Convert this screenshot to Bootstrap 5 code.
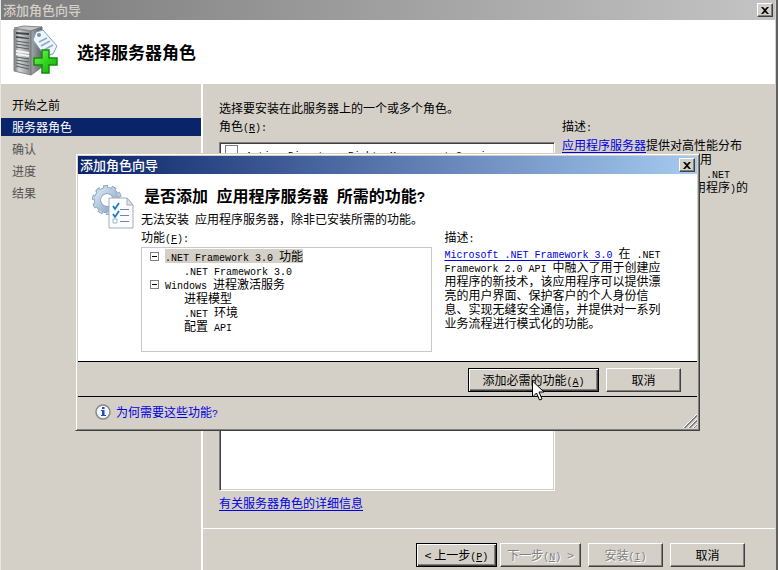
<!DOCTYPE html>
<html lang="zh-CN">
<head>
<meta charset="utf-8">
<meta name="viewport" content="width=device-width, initial-scale=1">
<title>添加角色向导</title>
<link href="https://cdn.jsdelivr.net/npm/bootstrap@5.3.0/dist/css/bootstrap.min.css" rel="stylesheet">
<style>
  :root { --face: #d4d0c8; --navy: #0a246a; --shade: #808080; --dark: #404040; --link: #0000e0; }
  body { background: var(--face); color: #000; font: 12px/18px "Noto Sans CJK SC", sans-serif; }
  a, a:hover { color: var(--link); text-underline-offset: 2px; text-decoration-thickness: 1px; }
  .lat { font-family: "Liberation Mono", monospace; font-size: 10px; line-height: 0; white-space: pre; }
  .wizard { border-left: 1px solid #e8e6e0; border-right: 2px solid #606060; padding-right: 1px; }
  .caption { font-size: 13px; font-weight: 500; }
  .caption-idle { height: 20px; padding: 0 2px; color: var(--face); background: linear-gradient(90deg, #7c7c7c, #c4c4c4); }
  .caption-live { height: 18px; padding: 0 2px; color: #fff; background: linear-gradient(90deg, var(--navy), #a6caf0); }
  .win-btn { background: var(--face); color: #000; border: 1px solid; border-color: #fff var(--dark) var(--dark) #fff; border-radius: 0; box-shadow: inset -1px -1px var(--shade); font-size: 12px; line-height: 16px; padding: 0; height: 24px; min-width: 75px; white-space: nowrap; }
  .win-btn.wide { min-width: 81px; }
  .win-btn.preset { border-color: #000; box-shadow: inset 1px 1px #fff, inset -1px -1px var(--dark), inset -2px -2px var(--shade); }
  .win-btn:disabled { color: var(--shade); text-shadow: 1px 1px #fff; }
  .close-btn { min-width: 16px; width: 16px; height: 14px; display: flex; align-items: center; justify-content: center; }
  .banner { height: 64px; padding-left: 10px; }
  .banner h1 { font-size: 17px; line-height: 24px; font-weight: 700; }
  .steps { flex: 0 0 202px; border-right: 2px solid #fff; padding-top: 12px; }
  .steps a { display: block; color: #000; line-height: 18px; padding: 0 11px; margin-bottom: 4px; text-decoration: none; }
  .steps a.current { background: var(--navy); color: #fff; }
  .steps a.later { color: #55534f; }
  .page-body { padding: 15px 0 16px 16px; }
  .role-grid { display: grid; grid-template-columns: 336fr 213fr; gap: 7px; }
  .role-list { border: 1px solid; border-color: var(--shade) #fff #fff var(--shade); box-shadow: inset 1px 1px var(--dark), inset -1px -1px var(--face); margin: 7px 0 3px; padding: 2px 5px; }
  .role-list input { appearance: none; width: 13px; height: 13px; margin: 0; border: 1px solid var(--shade); background: #fff; }
  .role-list label { padding-top: 2px; }
  .tight { line-height: 14px; white-space: nowrap; }
  .role-note { margin: 3px 0 0; }
  .page-foot { border-top: 1px solid #fff; padding: 14px 30px 3px 0; gap: 7px; }
  .pair { gap: 3px; }
  .dialog-win { position: absolute; left: 75px; top: 153px; width: 625px; background: var(--face); border: 1px solid; border-color: var(--face) var(--dark) var(--dark) var(--face); box-shadow: inset 1px 1px #fff, inset -1px -1px var(--shade); padding: 2px; }
  .dialog-page { padding: 8px 19px 9px 11px; border-bottom: 1px solid #000; }
  .dialog-page h2 { font-size: 16px; line-height: 26px; font-weight: 700; padding: 0 0 0 3px; margin-bottom: 2px; }
  .dialog-page h2 .lat { font-size: 14px; }
  .dialog-grid { display: grid; grid-template-columns: 292fr 234fr; gap: 12px; }
  .tree { border: 1px solid #c8c8cc; height: 105px; padding: 1px 0 0 8px; margin-top: 1px; }
  .tree ul { list-style: none; margin: 0; padding: 0; }
  .tree ul ul { padding-left: 34px; }
  .tree .node { display: flex; align-items: center; gap: 6px; }
  .tree .picked { background: var(--face); }
  .fold { width: 9px; height: 9px; padding: 0; border: 1px solid var(--shade); background: #fff; display: flex; align-items: center; justify-content: center; }
  .fold::before { content: ""; width: 5px; height: 1px; background: #000; }
  .dialog-actions { padding: 6px 16px 4px; gap: 7px; border-bottom: 1px solid #000; }
  .dialog-actions .preset { min-width: 131px; }
  .dialog-help { height: 31px; padding: 0 0 1px 17px; gap: 5px; }
  .grip { position: absolute; right: 2px; bottom: 2px; }
  .pointer { position: absolute; left: 456px; top: 226px; }
</style>
<script src="https://cdn.jsdelivr.net/npm/bootstrap@5.3.0/dist/js/bootstrap.bundle.min.js"></script>
</head>
<body>
<div class="wizard d-flex flex-column min-vh-100">
  <header>
    <div class="caption caption-idle d-flex align-items-center justify-content-between">
      <span>添加角色向导</span>
      <button class="win-btn close-btn" type="button" aria-label="关闭"><svg width="8" height="7" viewBox="0 0 8 7"><path d="M0 0h2l2 2 2-2h2L5 3.500 8 7H6L4 5 2 7H0l3-3.500z"/></svg></button>
    </div>
    <div class="banner bg-white d-flex align-items-center">
      <svg width="50" height="54" viewBox="0 0 50 54" aria-hidden="true">
        <defs>
          <linearGradient id="sv" x1="0" x2="1"><stop offset="0" stop-color="#6f7275"/><stop offset=".3" stop-color="#d3d6d8"/><stop offset="1" stop-color="#85898c"/></linearGradient>
          <linearGradient id="sd" x1="0" x2="1"><stop offset="0" stop-color="#a5a8aa"/><stop offset="1" stop-color="#5f6366"/></linearGradient>
          <linearGradient id="pl" x1="0" y1="0" x2="1" y2="1"><stop offset="0" stop-color="#8cf06c"/><stop offset=".5" stop-color="#31d51d"/><stop offset="1" stop-color="#16a80e"/></linearGradient>
        </defs>
        <path d="M3 3l10-2 18 1-11 4z" fill="#c3c6c8" stroke="#888"/>
        <path d="M3 4l17 2v44L3 46z" fill="url(#sv)" stroke="#85898c"/>
        <path d="M20 6l11-4v40l-11 8z" fill="url(#sd)" stroke="#777"/>
        <path d="M5 7l13 1v2L5 9zM5 11l13 2v1L5 13z" fill="#404448"/>
        <path d="M5 16l13 2M5 19l13 2M5 22l13 2M5 32l13 2M5 35l13 2M5 38l13 3M5 41l13 3" stroke="#5c5f62" stroke-width="1.200"/>
        <path d="M5 26l13 2M5 29l13 2" stroke="#f4f4f4" stroke-width="2"/>
        <path d="M24 8q3-5 6 1" fill="none" stroke="#555"/>
        <path d="M25 7l7-2 14 16-4 8-8 2-12-16z" fill="#edf5fd" stroke="#7f9ec2"/>
        <circle cx="28" cy="10" r="2" fill="#8190a0"/>
        <path d="M28 17l8-4M30 21l9-5M33 25l9-5" stroke="#92a9cb" stroke-width="1.500"/>
        <path d="M31 25h7v8h8v7h-8v8h-7v-8h-8v-7h8z" fill="url(#pl)" stroke="#138c0f" stroke-width="1.500"/>
      </svg>
      <h1 class="m-0 ps-3">选择服务器角色</h1>
    </div>
  </header>

  <div class="d-flex flex-grow-1">
    <nav class="steps" aria-label="步骤">
      <a href="#">开始之前</a>
      <a href="#" class="current" aria-current="step">服务器角色</a>
      <a href="#" class="later">确认</a>
      <a href="#" class="later">进度</a>
      <a href="#" class="later">结果</a>
    </nav>
    <main class="d-flex flex-column flex-grow-1">
      <div class="page-body d-flex flex-column flex-grow-1">
        <p class="m-0">选择要安装在此服务器上的一个或多个角色。</p>
        <div class="role-grid flex-grow-1">
          <section class="d-flex flex-column">
            <div id="roles-label">角色<span class="lat">(<u>R</u>):</span></div>
            <div class="role-list bg-white flex-grow-1" role="group" aria-labelledby="roles-label">
              <div class="d-flex align-items-start gap-2 tight">
                <input type="checkbox" id="role-rms"><label for="role-rms"><span class="lat">Active Directory Rights Management Servi</span></label>
              </div>
            </div>
            <div><a href="#">有关服务器角色的详细信息</a></div>
          </section>
          <section>
            <div>描述<span class="lat">:</span></div>
            <p class="tight role-note"><a href="#">应用程序服务器</a>提供对高性能分布<br>式的业务应用程序<span class="lat">(</span>例如使用<br><span class="lat">Enterprise Services </span>和<span class="lat">  .NET</span><br><span class="lat">Framework 3.0 </span>构建的应用程序<span class="lat">)</span>的</p>
          </section>
        </div>
      </div>
      <footer class="page-foot d-flex justify-content-end">
        <div class="pair d-flex">
          <button class="win-btn wide preset" type="button">&lt; 上一步<span class="lat">(<u>P</u>)</span></button>
          <button class="win-btn wide" type="button" disabled>下一步<span class="lat">(<u>N</u>) </span>&gt;</button>
        </div>
        <button class="win-btn" type="button" disabled>安装<span class="lat">(<u>I</u>)</span></button>
        <button class="win-btn" type="button">取消</button>
      </footer>
    </main>
  </div>
</div>

<div class="dialog-win" role="dialog" aria-labelledby="dialog-caption">
  <div class="caption caption-live d-flex align-items-center justify-content-between">
    <span id="dialog-caption">添加角色向导</span>
    <button class="win-btn close-btn" type="button" aria-label="关闭"><svg width="8" height="7" viewBox="0 0 8 7"><path d="M0 0h2l2 2 2-2h2L5 3.500 8 7H6L4 5 2 7H0l3-3.500z"/></svg></button>
  </div>
  <div class="dialog-page bg-white d-flex">
    <svg class="flex-shrink-0" width="52" height="50" viewBox="0 0 52 50" aria-hidden="true">
      <defs>
        <linearGradient id="gr" x1="0" y1="0" x2="1" y2="1"><stop offset="0" stop-color="#d5e3f0"/><stop offset="1" stop-color="#86a6c4"/></linearGradient>
      </defs>
      <circle cx="18" cy="18" r="12.500" fill="none" stroke="#7c9cba" stroke-width="5" stroke-dasharray="4.500 3.350"/>
      <circle cx="18" cy="18" r="9.500" fill="none" stroke="#7c9cba" stroke-width="7"/>
      <circle cx="18" cy="18" r="12.500" fill="none" stroke="#bdd0e2" stroke-width="3.500" stroke-dasharray="3.500 4.350" stroke-dashoffset="-.5"/>
      <circle cx="18" cy="18" r="9.500" fill="none" stroke="url(#gr)" stroke-width="5.500"/>
      <path d="M20 16h18l6 7v23H20z" fill="#fafcff" stroke="#a4adb8"/>
      <path d="M38 16v7h6z" fill="#dce3ea" stroke="#a4adb8"/>
      <path d="M24 24l2 3 4-6M24 32l2 3 4-6" fill="none" stroke="#187fc0" stroke-width="1.800"/>
      <path d="M24 37h4v4h-4z" fill="#fff" stroke="#9fb4c8"/>
      <path d="M31 27.500h9M31 33.500h9M31 39.500h9" stroke="#7182a8"/>
    </svg>
    <div class="flex-grow-1">
      <h2>是否添加<span class="lat"> </span>应用程序服务器<span class="lat"> </span>所需的功能<span class="lat">?</span></h2>
      <p class="m-0">无法安装<span class="lat"> </span>应用程序服务器，除非已安装所需的功能。</p>
      <div class="dialog-grid">
        <section>
          <div>功能<span class="lat">(<u>F</u>):</span></div>
          <div class="tree tight">
            <ul>
              <li><div class="node"><button class="fold" type="button" aria-label="折叠"></button><span class="picked"><span class="lat">.NET Framework 3.0 </span>功能</span></div>
                <ul><li><span class="lat">.NET Framework 3.0</span></li></ul></li>
              <li><div class="node"><button class="fold" type="button" aria-label="折叠"></button><span><span class="lat">Windows </span>进程激活服务</span></div>
                <ul><li>进程模型</li><li><span class="lat">.NET </span>环境</li><li>配置<span class="lat"> API</span></li></ul></li>
            </ul>
          </div>
        </section>
        <section>
          <div>描述<span class="lat">:</span></div>
          <p class="tight m-0"><a href="#"><span class="lat">Microsoft .NET Framework 3.0</span></a><span class="lat"> </span>在<span class="lat"> .NET</span><br><span class="lat">Framework 2.0 API </span>中融入了用于创建应<br>用程序的新技术，该应用程序可以提供漂<br>亮的用户界面、保护客户的个人身份信<br>息、实现无缝安全通信，并提供对一系列<br>业务流程进行模式化的功能。</p>
        </section>
      </div>
    </div>
  </div>
  <div class="dialog-actions d-flex justify-content-end">
    <button class="win-btn preset" type="button">添加必需的功能<span class="lat">(<u>A</u>)</span></button>
    <button class="win-btn" type="button">取消</button>
  </div>
  <div class="dialog-help d-flex align-items-center">
    <svg width="16" height="16" viewBox="0 0 16 16" aria-hidden="true"><circle cx="8" cy="8" r="7" fill="#f4f7fc" stroke="#84888f" stroke-width="1.500"/><path d="M7 3h2.500v2H7zM6 6h3.500v5H11v1H6v-1h1V7H6z" fill="#2347c5"/></svg>
    <a href="#" class="text-decoration-none">为何需要这些功能<span class="lat">?</span></a>
  </div>
  <svg class="grip" width="14" height="14" viewBox="0 0 14 14" aria-hidden="true"><path d="M0 14L14 0M5 14l9-9M10 14l4-4" stroke="#fff"/><path d="M1 14L14 1M2 14L14 2M6 14l8-8M7 14l7-7M11 14l3-3" stroke="#808080"/></svg>
  <svg class="pointer" width="13" height="22" viewBox="0 0 13 22" aria-hidden="true"><path d="M.5 1v16l4-4 3 7 2.500-1-3-7H12z" fill="#fff" stroke="#000"/></svg>
</div>
</body>
</html>
